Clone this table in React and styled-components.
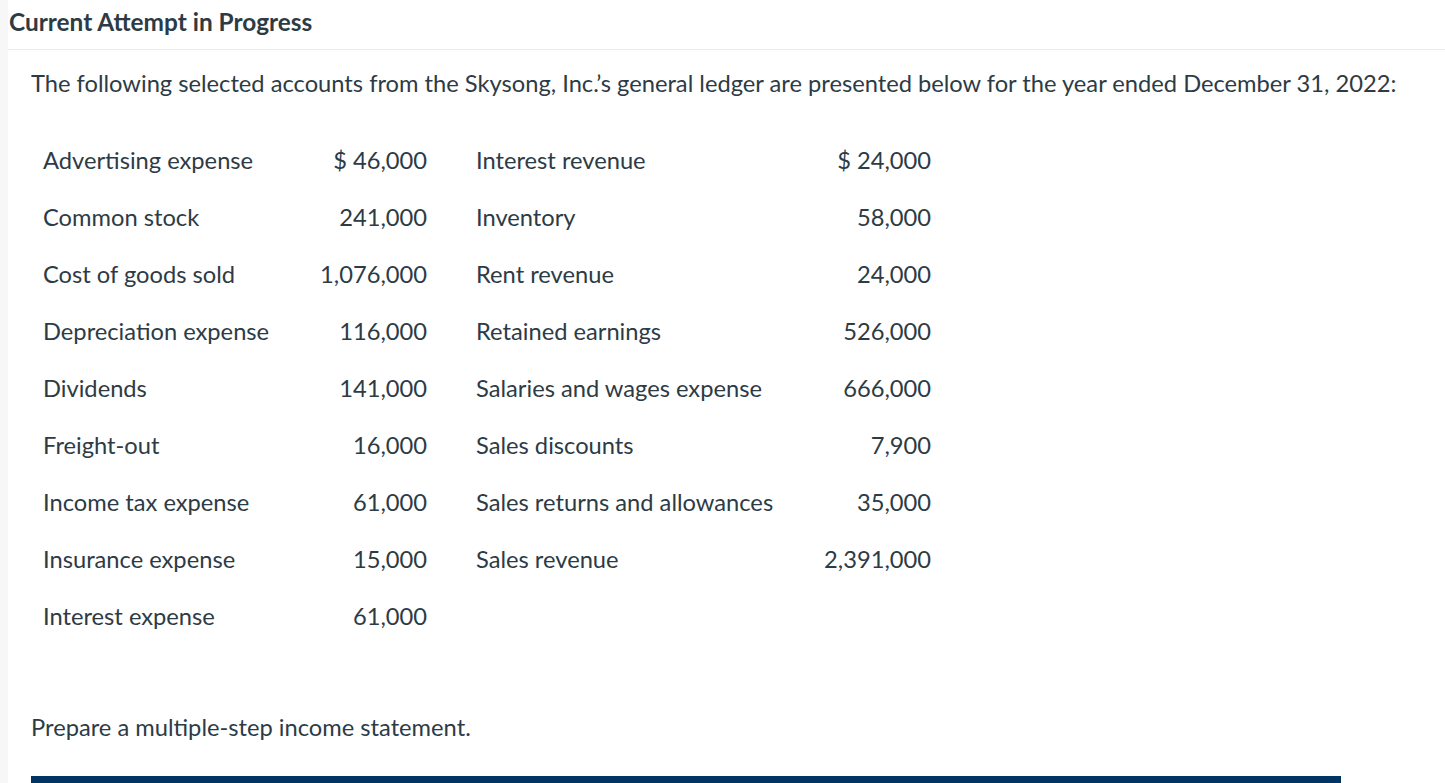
import React from "react";
import styled, { createGlobalStyle } from "styled-components";

const GlobalStyle = createGlobalStyle`
  body {
    margin: 0;
    font-family: Lato, "Open Sans", sans-serif;
    color: #2d3b45;
    background: #ffffff;
    overflow: hidden;
  }
`;

const Page = styled.div`
  display: flex;
  min-height: 783px;
`;

const SideStrip = styled.div`
  width: 8px;
  flex-shrink: 0;
  background-color: #f7f7f7;
`;

const Main = styled.main`
  flex: 1;
  min-width: 0;
`;

const Header = styled.header`
  height: 50px;
  display: flex;
  align-items: center;
  padding-left: 1px;
  padding-bottom: 6px;
  box-sizing: border-box;
  border-bottom: 1px solid #ebebeb;
`;

const Title = styled.h1`
  margin: 0;
  font-size: 24.4px;
  font-weight: 700;
  line-height: 30px;
`;

const Body = styled.section`
  padding: 0 104px 0 23px;
`;

const Paragraph = styled.p`
  margin: ${(p) => p.$top}px 0 0;
  font-size: 23.7px;
  line-height: 30px;
  white-space: nowrap;
`;

const Ledger = styled.div`
  display: grid;
  grid-template-columns: 256px 128px 380px 124px;
  grid-auto-rows: 57px;
  margin-top: 33px;
  padding-left: 12px;
  font-size: 23.7px;
`;

const Cell = styled.div`
  display: flex;
  align-items: center;
  justify-content: ${(p) => (p.$amount ? "flex-end" : "flex-start")};
  padding-left: ${(p) => (p.$second ? "49px" : "0")};
  white-space: nowrap;
`;

const ActionBar = styled.div`
  margin-top: 34px;
  height: 40px;
  background-color: #003463;
`;

const rows = [
  ["Advertising expense", "$ 46,000", "Interest revenue", "$ 24,000"],
  ["Common stock", "241,000", "Inventory", "58,000"],
  ["Cost of goods sold", "1,076,000", "Rent revenue", "24,000"],
  ["Depreciation expense", "116,000", "Retained earnings", "526,000"],
  ["Dividends", "141,000", "Salaries and wages expense", "666,000"],
  ["Freight-out", "16,000", "Sales discounts", "7,900"],
  ["Income tax expense", "61,000", "Sales returns and allowances", "35,000"],
  ["Insurance expense", "15,000", "Sales revenue", "2,391,000"],
  ["Interest expense", "61,000", "", ""],
];

const App = () => {
  return (
    <>
      <GlobalStyle />
      <Page>
        <SideStrip />
        <Main>
          <Header>
            <Title>Current Attempt in Progress</Title>
          </Header>
          <Body>
            <Paragraph $top={18}>
              The following selected accounts from the Skysong, Inc.’s general ledger are presented below for the year ended December 31, 2022:
            </Paragraph>
            <Ledger>
              {rows.map((r, i) => (
                <React.Fragment key={i}>
                  <Cell>{r[0]}</Cell>
                  <Cell $amount>{r[1]}</Cell>
                  <Cell $second>{r[2]}</Cell>
                  <Cell $amount>{r[3]}</Cell>
                </React.Fragment>
              ))}
            </Ledger>
            <Paragraph $top={68}>Prepare a multiple-step income statement.</Paragraph>
            <ActionBar />
          </Body>
        </Main>
      </Page>
    </>
  );
};

export default App;
